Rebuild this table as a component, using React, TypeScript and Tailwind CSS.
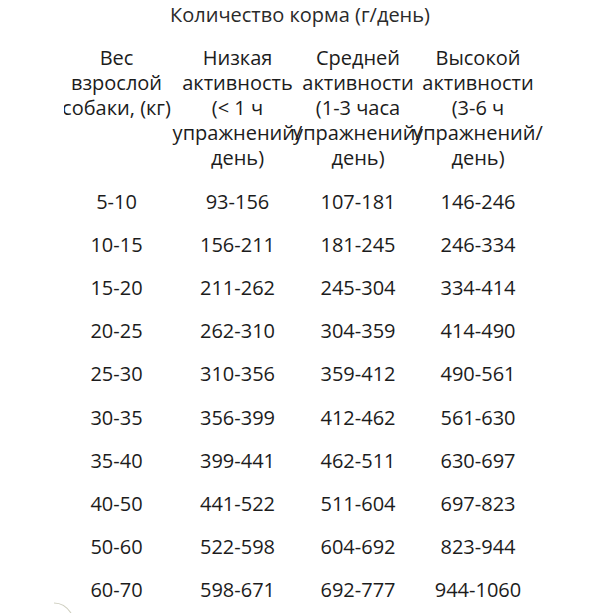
import React from "react";

const rows: [string, string, string, string][] = [
  ["5-10", "93-156", "107-181", "146-246"],
  ["10-15", "156-211", "181-245", "246-334"],
  ["15-20", "211-262", "245-304", "334-414"],
  ["20-25", "262-310", "304-359", "414-490"],
  ["25-30", "310-356", "359-412", "490-561"],
  ["30-35", "356-399", "412-462", "561-630"],
  ["35-40", "399-441", "462-511", "630-697"],
  ["40-50", "441-522", "511-604", "697-823"],
  ["50-60", "522-598", "604-692", "823-944"],
  ["60-70", "598-671", "692-777", "944-1060"],
];

const headers: string[][] = [
  ["Вес", "взрослой", "собаки, (кг)"],
  ["Низкая", "активность", "(< 1 ч", "упражнений/", "день)"],
  ["Средней", "активности", "(1-3 часа", "упражнений/", "день)"],
  ["Высокой", "активности", "(3-6 ч", "упражнений/", "день)"],
];

export default function App() {
  return (
    <div
      className="relative w-[613px] h-[613px] bg-white text-[#1c1c1c] overflow-hidden"
      style={{ fontFamily: '"Open Sans", "Noto Sans", sans-serif' }}
    >
      <div className="pl-[64px]">
        <div className="overflow-hidden">
          <div className="ml-[-8px] w-[482px]">
            <h1 className="pt-[2px] pl-[6px] text-center text-[20px] leading-[26px] font-normal text-[#2a2a2a]">
              Количество корма (г/день)
            </h1>

            <div className="mt-[17px] grid grid-cols-[121px_121px_120px_120px] text-[20px] leading-[25px]">
              {headers.map((lines, i) => (
                <div key={i} className="flex flex-col items-center whitespace-nowrap">
                  {lines.map((l) => (
                    <span key={l}>{l}</span>
                  ))}
                </div>
              ))}
            </div>

            <div className="mt-[10px] flex flex-col">
              {rows.map((r) => (
                <div
                  key={r[0]}
                  className="grid grid-cols-[121px_121px_120px_120px] h-[43.2px] items-center text-center text-[20px]"
                >
                  {r.map((c, j) => (
                    <span key={j}>{c}</span>
                  ))}
                </div>
              ))}
            </div>
          </div>
        </div>
      </div>

      <svg
        className="absolute left-[50px] top-[598px]"
        width="30"
        height="15"
        viewBox="0 0 30 15"
        fill="none"
      >
        <path d="M4 5 C 11 5, 17 9, 21 15" stroke="#cfcfc0" strokeWidth="1.2" />
      </svg>
    </div>
  );
}
